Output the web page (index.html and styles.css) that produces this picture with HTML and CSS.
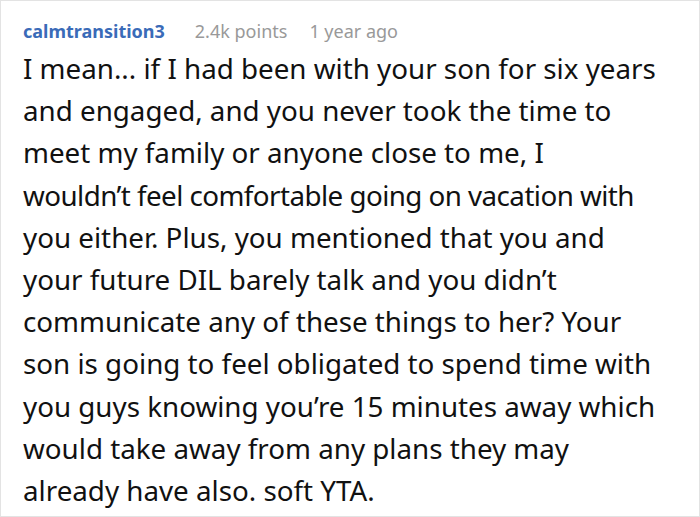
FILE: index.html
```html
<!DOCTYPE html>
<html>
<head>
<meta charset="utf-8">
<link rel="stylesheet" href="styles.css">
</head>
<body>
<div class="comment">
  <div class="meta">
    <span class="user">calmtransition3</span>
    <span class="info">2.4k points</span>
    <span class="info">1 year ago</span>
  </div>
  <p class="text">I mean... if I had been with your son for six years<br>
and engaged, and you never took the time to<br>
meet my family or anyone close to me, I<br>
<span class="tight">wouldn’t feel comfortable going on vacation with</span><br>
you either. Plus, you mentioned that you and<br>
your future DIL barely talk and you didn’t<br>
communicate any of these things to her? Your<br>
son is going to feel obligated to spend time with<br>
you guys knowing you’re 15 minutes away which<br>
would take away from any plans they may<br>
already have also. soft YTA.</p>
</div>
</body>
</html>
```
FILE: styles.css
```css
html, body {
  margin: 0;
  padding: 0;
  background: #fff;
}
.comment {
  box-sizing: border-box;
  width: 700px;
  height: 517px;
  border: 1px solid #e3e3e3;
  padding: 18px 20px 0 22px;
  font-family: "Noto Sans", "Open Sans", sans-serif;
}
.meta {
  display: flex;
  gap: 22px;
  font-size: 18px;
  line-height: 24px;
}
.user {
  color: #3a6bb8;
  font-weight: 700;
  margin-right: 8px;
}
.info {
  color: #999;
}
.text {
  margin: 4px 0 0;
  font-size: 27.75px;
  line-height: 42.2px;
  color: #111;
  white-space: nowrap;
}
.tight {
  letter-spacing: -0.55px;
}
```
